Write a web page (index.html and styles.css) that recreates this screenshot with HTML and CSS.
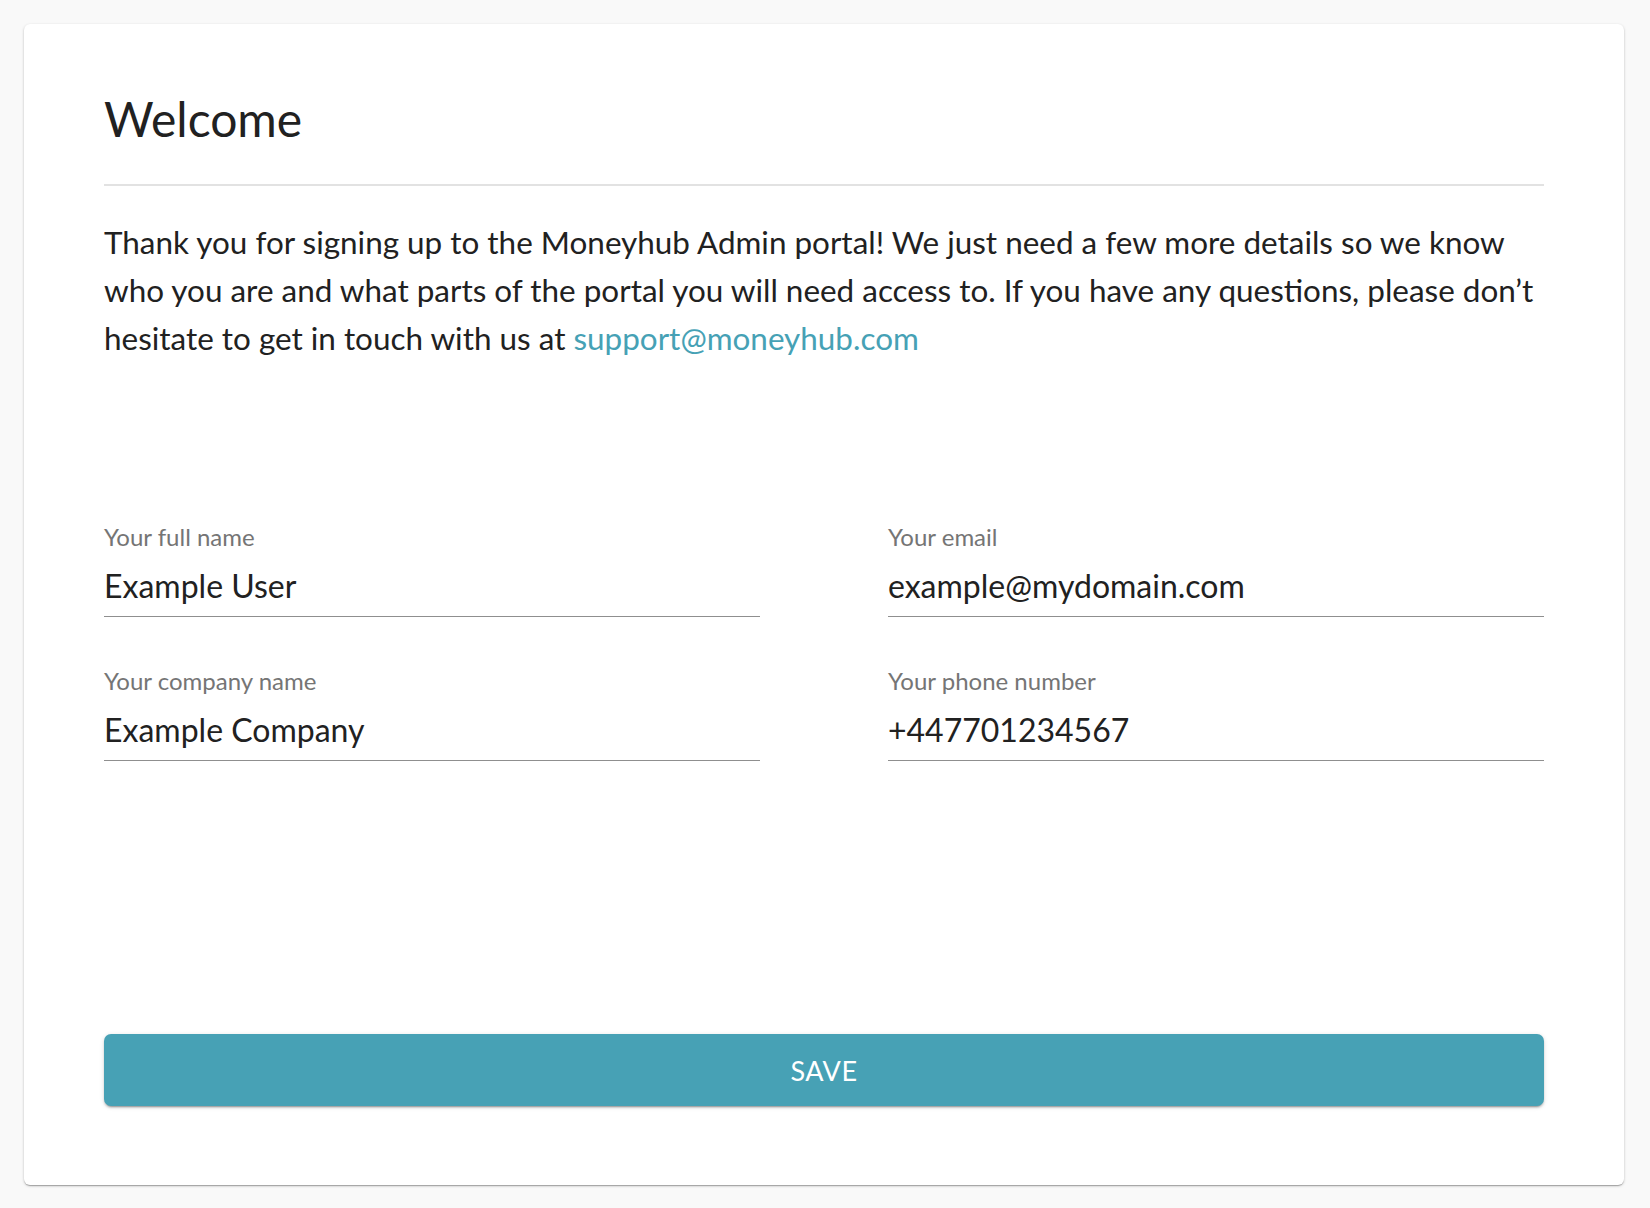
FILE: index.html
```html
<!DOCTYPE html>
<html lang="en">
<head>
<meta charset="utf-8">
<title>Welcome</title>
<link rel="stylesheet" href="styles.css">
</head>
<body>
<main class="card">
  <h1 class="title">Welcome</h1>
  <hr class="divider">
  <p class="intro">Thank you for signing up to the Moneyhub Admin portal! We just need a few more details so we know who you are and what parts of the portal you will need access to. If you have any questions, please don’t hesitate to get in touch with us at <a class="link" href="#">support@moneyhub.com</a></p>
  <form class="form">
    <div class="field">
      <label class="label">Your full name</label>
      <div class="input">Example User</div>
    </div>
    <div class="field">
      <label class="label">Your email</label>
      <div class="input">example@mydomain.com</div>
    </div>
    <div class="field">
      <label class="label">Your company name</label>
      <div class="input">Example Company</div>
    </div>
    <div class="field">
      <label class="label">Your phone number</label>
      <div class="input">+447701234567</div>
    </div>
  </form>
  <button class="save" type="button">SAVE</button>
</main>
</body>
</html>
```

FILE: styles.css
```css
* { box-sizing: border-box; }
html, body { margin: 0; padding: 0; }
body {
  background: #f9f9f9;
  font-family: Lato, "Open Sans", "Liberation Sans", sans-serif;
  color: #212121;
  padding: 24px 26px 23px 24px;
}
.card {
  background: #fff;
  border-radius: 6px;
  box-shadow: 0 1px 3px rgba(0,0,0,0.2), 0 1px 1px rgba(0,0,0,0.14), 0 2px 1px -1px rgba(0,0,0,0.12);
  height: 1161px;
  padding: 66px 80px 79px 80px;
  display: flex;
  flex-direction: column;
}
.title {
  margin: 0;
  font-size: 48px;
  font-weight: 400;
  line-height: 58px;
  color: #212121;
}
.divider {
  margin: 36px 0 0 0;
  border: 0;
  height: 2px;
  background: #e2e2e2;
}
.intro {
  margin: 32px 0 0 0;
  font-size: 31.45px;
  line-height: 48px;
  color: #212121;
}
.link {
  color: #46a1b5;
  text-decoration: none;
}
.form {
  margin-top: 163px;
  display: grid;
  grid-template-columns: 1fr 1fr;
  column-gap: 128px;
  row-gap: 52px;
}
.field {
  display: flex;
  flex-direction: column;
}
.label {
  font-size: 24px;
  line-height: 24px;
  color: #757575;
}
.input {
  margin-top: 18px;
  font-size: 32px;
  line-height: 38px;
  padding-bottom: 11px;
  border-bottom: 1px solid #8f8f8f;
  color: #212121;
}
.save {
  margin-top: auto;
  height: 72px;
  width: 100%;
  border: 0;
  border-radius: 7px;
  background: #47a1b5;
  color: #fff;
  font-family: Lato, "Open Sans", "Liberation Sans", sans-serif;
  font-size: 27px;
  letter-spacing: 0.5px;
  box-shadow: 0 3px 1px -2px rgba(0,0,0,0.2), 0 2px 2px 0 rgba(0,0,0,0.14), 0 1px 5px 0 rgba(0,0,0,0.12);
  cursor: pointer;
}
```
